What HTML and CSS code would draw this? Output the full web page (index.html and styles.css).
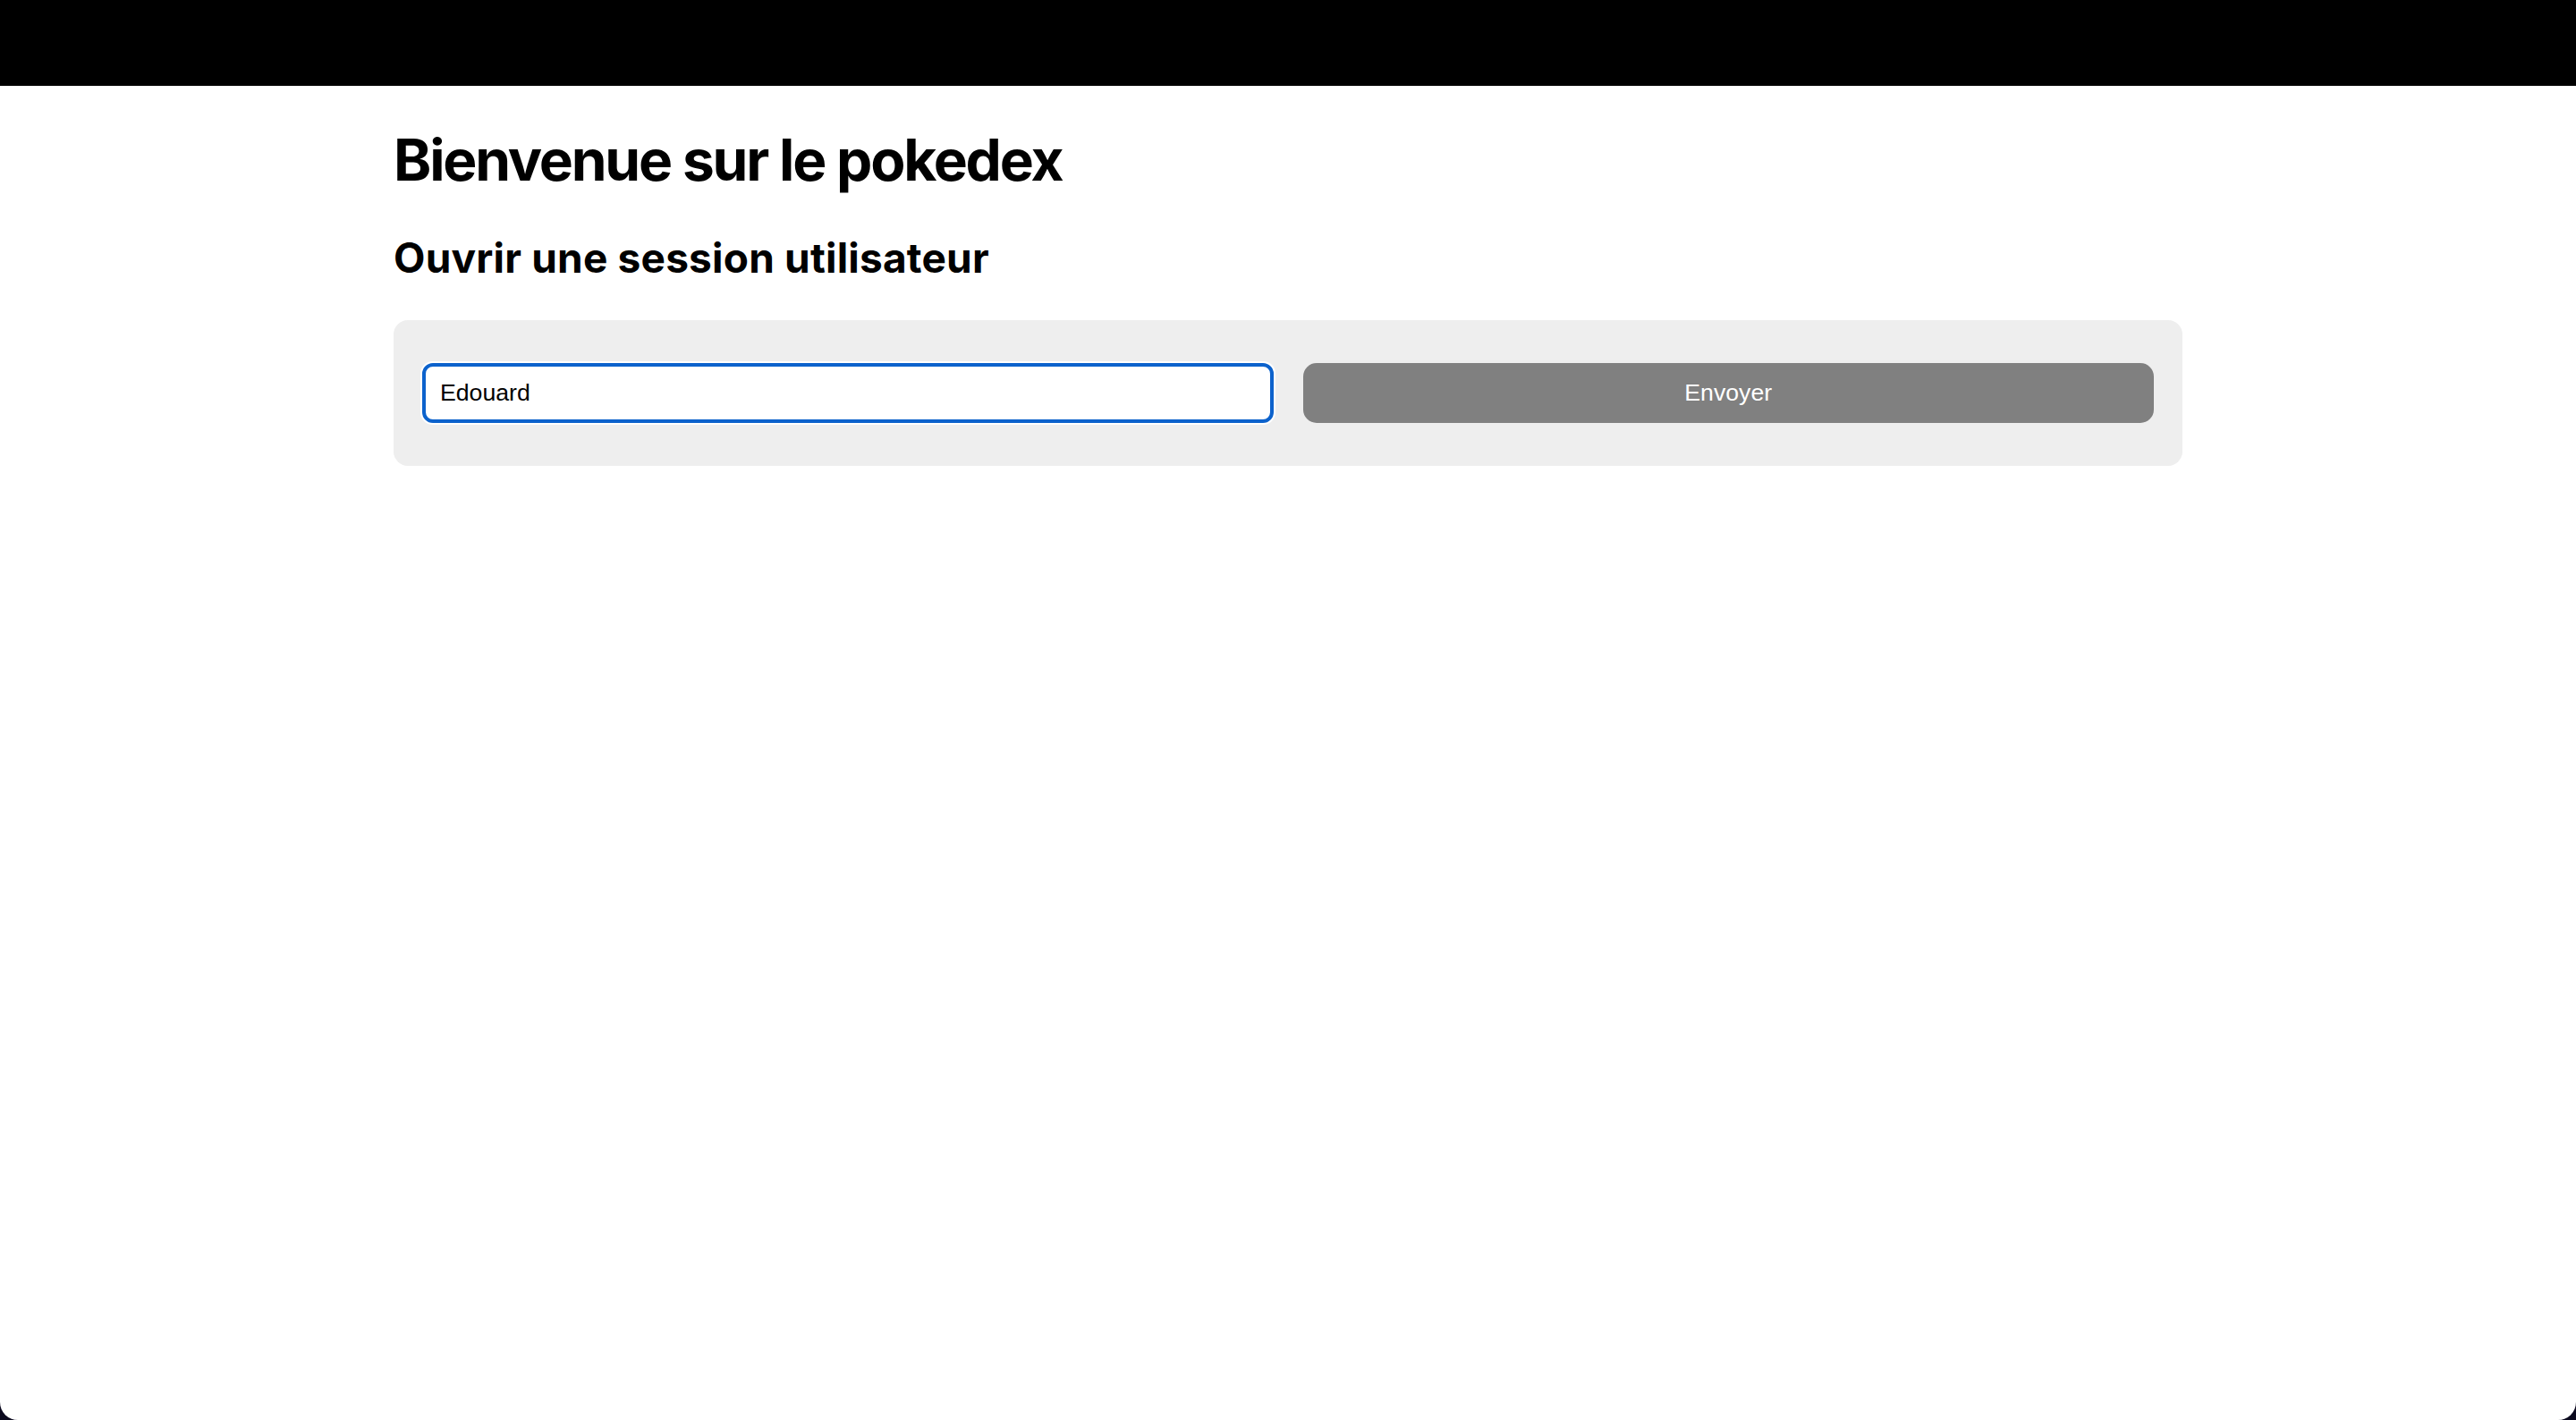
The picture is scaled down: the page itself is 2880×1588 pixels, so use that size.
FILE: index.html
```html
<!DOCTYPE html>
<html lang="fr">
<head>
<meta charset="utf-8">
<title>Pokedex</title>
<link rel="stylesheet" href="styles.css">
</head>
<body>
<div class="window">
  <header class="topbar"></header>
  <main class="content">
    <h1 class="title">Bienvenue sur le pokedex</h1>
    <h2 class="subtitle">Ouvrir une session utilisateur</h2>
    <form class="login-panel">
      <input class="login-input" type="text" value="Edouard" autofocus>
      <button class="login-button" type="button">Envoyer</button>
    </form>
  </main>
</div>
</body>
</html>
```

FILE: styles.css
```css
html {
  margin: 0;
  padding: 0;
  background: #0c0a1f;
  height: 100%;
}

body {
  margin: 0;
  padding: 0;
  height: 100%;
  font-family: Inter, "Liberation Sans", sans-serif;
}

.window {
  min-height: 100%;
  background: #ffffff;
  border-radius: 0 0 20px 20px;
  overflow: hidden;
}

.topbar {
  height: 96px;
  background: #000000;
}

.content {
  width: 2000px;
  margin: 0 auto;
  padding-top: 44px;
}

.title {
  margin: 0;
  font-size: 64px;
  line-height: 77px;
  font-weight: 700;
  letter-spacing: -2.2px;
  color: #000;
}

.subtitle {
  margin: 44px 0 0 0;
  font-size: 46px;
  line-height: 55px;
  font-weight: 700;
  letter-spacing: 0.2px;
  color: #000;
}

.login-panel {
  margin-top: 42px;
  background: #eeeeee;
  border-radius: 16px;
  padding: 48px 32px;
  display: grid;
  grid-template-columns: 1fr 1fr;
  gap: 33px;
}

.login-input {
  box-sizing: border-box;
  height: 67px;
  margin: 0;
  padding: 0 16px;
  border: 4px solid #0c62cc;
  border-radius: 12px;
  box-shadow: 0 0 0 2px #ffffff;
  background: #ffffff;
  font-family: "Liberation Sans", Arial, sans-serif;
  font-size: 26.67px;
  color: #000;
  outline: none;
  caret-color: #000;
}

.login-button {
  box-sizing: border-box;
  height: 67px;
  margin: 0;
  border: none;
  border-radius: 15px;
  background: #808080;
  color: #ffffff;
  font-family: "Liberation Sans", Arial, sans-serif;
  font-size: 26.67px;
  cursor: pointer;
}
```
